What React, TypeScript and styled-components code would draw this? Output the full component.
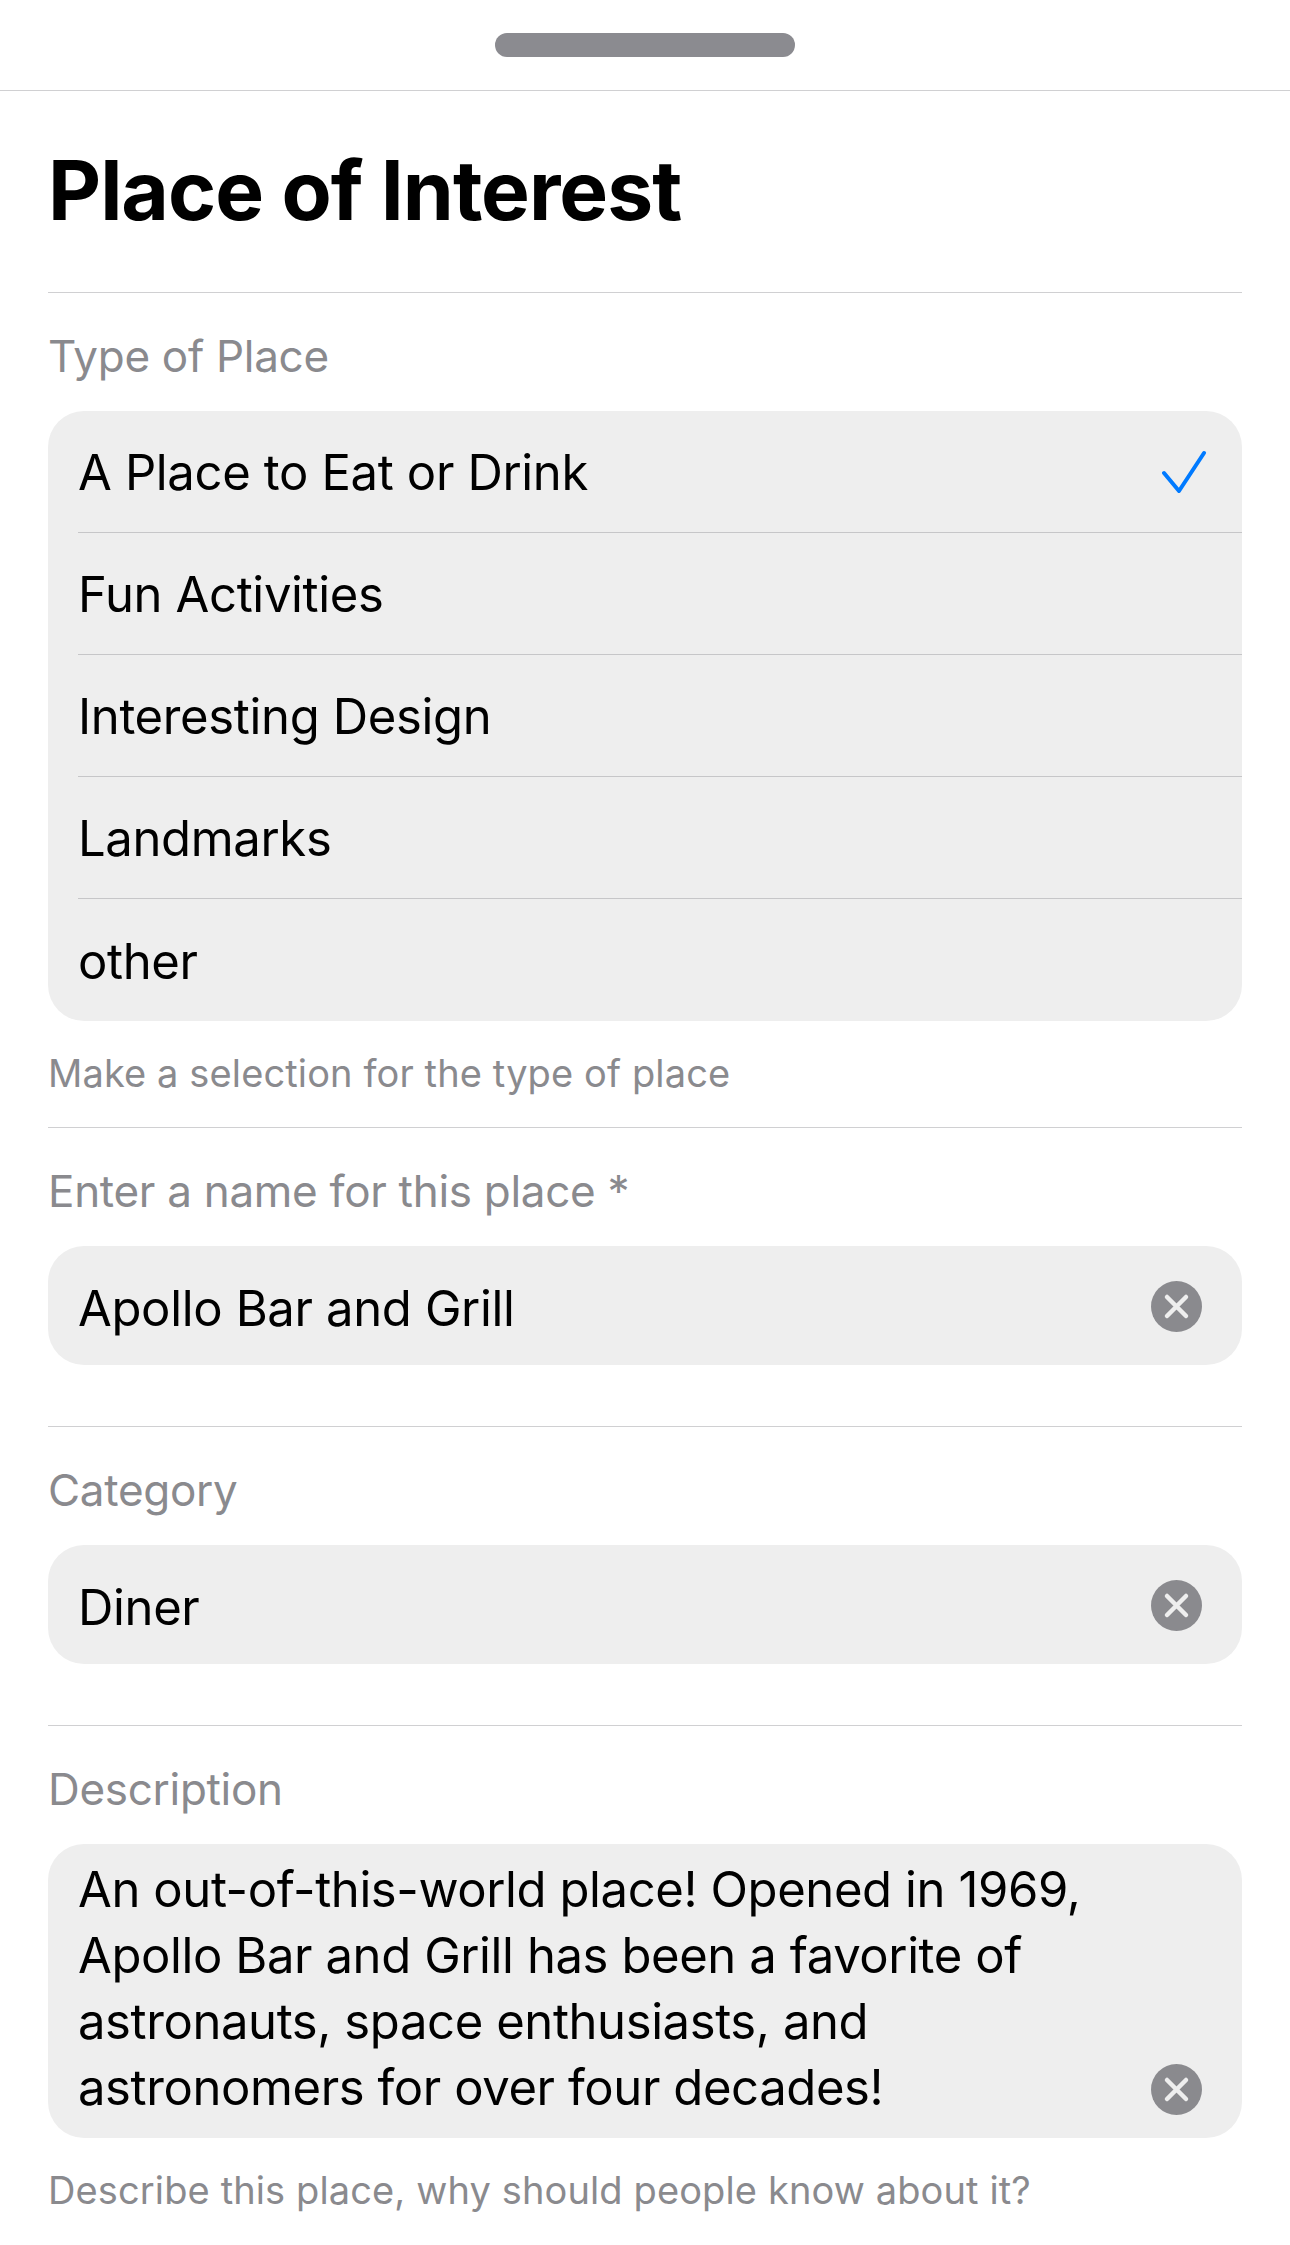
import React from "react";
import styled, { createGlobalStyle } from "styled-components";

const Global = createGlobalStyle`
  html, body { margin: 0; padding: 0; background: #fff; }
  body { font-family: Inter, "Liberation Sans", sans-serif; color: #000; }
`;
const Page = styled.div`
  width: 1290px;
  height: 2245px;
  overflow: hidden;
  background: #fff;
`;
const HandleBar = styled.div`
  display: flex;
  justify-content: center;
  padding-top: 33px;
  box-sizing: border-box;
  border-bottom: 1px solid #d0d0d2;
  height: 91px;
`;
const Handle = styled.div`
  width: 300px;
  height: 24px;
  border-radius: 12px;
  background: #8b8b90;
`;
const Content = styled.div`
  padding: 0 48px;
`;
const Title = styled.h1`
  margin: 0;
  height: 202px;
  box-sizing: border-box;
  padding-top: 50px;
  font-size: 82px;
  line-height: 100px;
  font-weight: 700;
  letter-spacing: -1px;
  border-bottom: 1px solid #d0d0d2;
`;
const Section = styled.section<{ $height: number }>`
  height: ${(p) => p.$height}px;
  box-sizing: border-box;
  border-bottom: ${(p) => (p.$height ? "1px solid #d0d0d2" : "none")};
`;
const Label = styled.div`
  height: 118px;
  box-sizing: border-box;
  padding-top: 36px;
  font-size: 44px;
  line-height: 54px;
  letter-spacing: -0.3px;
  color: #8a8a8e;
`;
const Card = styled.div`
  background: #eeeeee;
  border-radius: 36px;
  overflow: hidden;
`;
const Row = styled.div<{ $last?: boolean }>`
  height: 122px;
  margin-left: 30px;
  padding: 2px 34px 0 0;
  box-sizing: border-box;
  display: flex;
  align-items: center;
  justify-content: space-between;
  font-size: 49px;
  letter-spacing: -0.35px;
  border-bottom: ${(p) => (p.$last ? "none" : "1px solid #c6c6c8")};
`;
const Field = styled.div`
  height: 119px;
  background: #eeeeee;
  border-radius: 36px;
  box-sizing: border-box;
  padding: 0 40px 0 30px;
  display: flex;
  align-items: center;
  justify-content: space-between;
  font-size: 49px;
  letter-spacing: -0.35px;
`;
const FieldText = styled.span`
  padding-top: 6px;
`;
const FieldClear = styled.div`
  padding-top: 2px;
  display: flex;
`;
const Area = styled.div`
  height: 294px;
  background: #eeeeee;
  border-radius: 36px;
  box-sizing: border-box;
  padding: 13px 40px 0 30px;
  display: flex;
  align-items: flex-end;
  justify-content: space-between;
  font-size: 49px;
  line-height: 66px;
  letter-spacing: -0.4px;
`;
const AreaText = styled.div`
  align-self: flex-start;
  white-space: pre-line;
`;
const Help = styled.div`
  padding-top: 29px;
  font-size: 38px;
  line-height: 46px;
  letter-spacing: 0.12px;
  color: #8a8a8e;
`;
const ClearIcon = styled.svg`
  width: 51px;
  height: 51px;
  flex: none;
  display: block;
`;
const AreaClear = styled.div`
  margin-bottom: 23px;
  display: flex;
`;

const Clear = () => (
  <ClearIcon viewBox="0 0 51 51">
    <circle cx="25.5" cy="25.5" r="25.5" fill="#8a8a8e" />
    <path d="M16 16 L35 35 M35 16 L16 35" stroke="#eeeeee" strokeWidth="4.5" strokeLinecap="round" />
  </ClearIcon>
);

const Check = () => (
  <svg width="46" height="46" viewBox="0 0 46 46">
    <path d="M2 23 L17 41 L42 3" fill="none" stroke="#007aff" strokeWidth="4" strokeLinecap="round" strokeLinejoin="round" />
  </svg>
);

const types = ["A Place to Eat or Drink", "Fun Activities", "Interesting Design", "Landmarks", "other"];

export default function App() {
  return (
    <Page>
      <Global />
      <HandleBar><Handle /></HandleBar>
      <Content>
        <Title>Place of Interest</Title>
        <Section $height={835}>
          <Label>Type of Place</Label>
          <Card>
            {types.map((t, i) => (
              <Row key={t} $last={i === types.length - 1}>
                {t}
                {i === 0 && <Check />}
              </Row>
            ))}
          </Card>
          <Help>Make a selection for the type of place</Help>
        </Section>
        <Section $height={299}>
          <Label>Enter a name for this place *</Label>
          <Field><FieldText>Apollo Bar and Grill</FieldText><FieldClear><Clear /></FieldClear></Field>
        </Section>
        <Section $height={299}>
          <Label>Category</Label>
          <Field><FieldText>Diner</FieldText><FieldClear><Clear /></FieldClear></Field>
        </Section>
        <Section $height={0}>
          <Label>Description</Label>
          <Area>
            <AreaText>{"An out-of-this-world place! Opened in 1969,\nApollo Bar and Grill has been a favorite of\nastronauts, space enthusiasts, and\nastronomers for over four decades!"}</AreaText>
            <AreaClear><Clear /></AreaClear>
          </Area>
          <Help>Describe this place, why should people know about it?</Help>
        </Section>
      </Content>
    </Page>
  );
}
